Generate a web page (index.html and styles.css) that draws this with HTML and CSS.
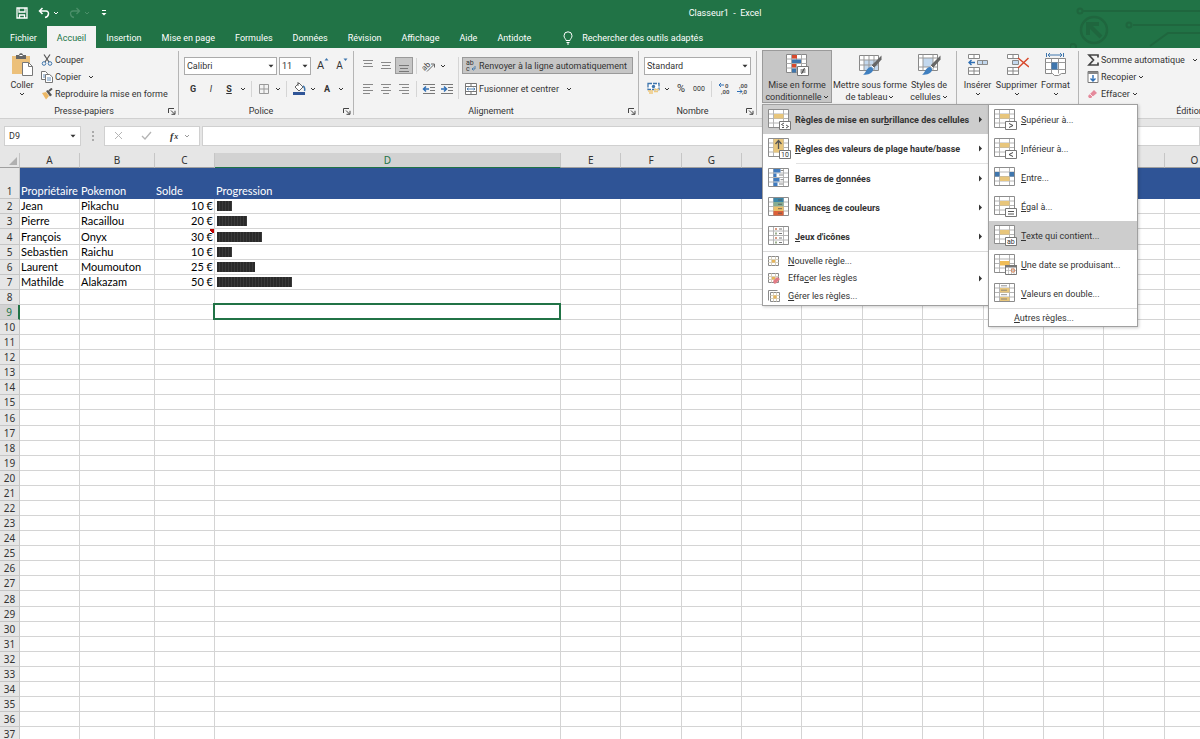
FILE: index.html
```html
<!DOCTYPE html>
<html lang="fr">
<head>
<meta charset="utf-8">
<title>Classeur1 - Excel</title>
<link rel="stylesheet" href="styles.css">
</head>
<body>
<svg class="defs" aria-hidden="true">
  <symbol id="chev" viewBox="0 0 6 6"><path d="M1 2l2 2 2-2" fill="none" stroke="currentColor"/></symbol>
  <symbol id="tri" viewBox="0 0 6 6"><path d="M.5 1.8h5L3 4.6z" fill="currentColor"/></symbol>
  <symbol id="launch" viewBox="0 0 8 8"><path d="M.5 6V1.500H6M3 3.500l3.500 3.500M7 3.800V7.300H3.500" fill="none" stroke="#444"/></symbol>
  <symbol id="grid" viewBox="0 0 24 22"><path d="M.5.5h20v18H.5z" fill="#fff"/><path d="M.5 5h20M.5 9.500h20M.5 14h20M5.500.5v18M15.500.5v18" fill="none" stroke="#b4b4b4"/><path d="M.5.5h20v18H.5z" fill="none" stroke="#8c8c8c"/></symbol>
  <symbol id="tag" viewBox="0 0 24 22"><path d="M11.500 12.500h11v8h-11z" fill="#fff" stroke="#777"/></symbol>
  <symbol id="g-hl" viewBox="0 0 24 22"><use href="#grid" width="24" height="22"/><path d="M6 5h9.500v4.500H6z" fill="#e8c67c"/></symbol>
  <symbol id="i-top" viewBox="0 0 24 22"><use href="#g-hl" width="24" height="22"/><use href="#tag" width="24" height="22"/><path d="M16 14l-2.500 1.500L16 17M14 18.500h2M18 16l2.500 1.500L18 19" fill="none" stroke="#444" stroke-width=".9"/></symbol>
  <symbol id="i-ten" viewBox="0 0 24 22"><use href="#grid" width="24" height="22"/><path d="M5.500 1h10v13.500h-10z" fill="#e8c67c"/><path d="M10.500 11V3M7.500 6l3-3.500 3 3.500" fill="none" stroke="#555" stroke-width="1.300"/><use href="#tag" width="24" height="22"/><text x="13" y="19" class="tagtext">10</text></symbol>
  <symbol id="i-bars" viewBox="0 0 24 22"><use href="#grid" width="24" height="22"/><path d="M5.500 1h7v3.500h-7zM5.500 5.500h3v3.500h-3zM5.500 10h6v3.500h-6zM5.500 14.500h4v3.500h-4z" fill="#3f7bbf"/><path d="M12.500 2.500h3M11 7h4M12.500 11.700h3M11 16h4" stroke="#888"/></symbol>
  <symbol id="i-scale" viewBox="0 0 24 22"><use href="#grid" width="24" height="22"/><path d="M5.500 1h10v4h-10z" fill="#3c87a8"/><path d="M5.500 5h10v4.500h-10z" fill="#86ad92"/><path d="M5.500 9.500h10V14h-10z" fill="#ecc168"/><path d="M5.500 14h10v4.500h-10z" fill="#dc6038"/><path d="M10 3h4M10 7.300h4M10 11.700h4M10 16.200h4" stroke="#555" stroke-width=".8"/></symbol>
  <symbol id="i-set" viewBox="0 0 24 22"><use href="#grid" width="24" height="22"/><path d="M7 2h2v2H7zM7 11h2v2H7z" fill="#d99a83"/><path d="M7 6.500h2v2H7zM7 15.500h2v2H7z" fill="#9ab08c"/><path d="M11 3h3M11 7.500h3M11 12h3M11 16.500h3" stroke="#777"/></symbol>
  <symbol id="i-rule" viewBox="0 0 12 12"><path d="M.5 1.500h10v9H.5z" fill="#fff" stroke="#8a8a8a"/><path d="M3.500 1.500v9M7.500 1.500v9M.5 4.500h10M.5 7.500h10" stroke="#d8d0bc"/><path d="M4 5h3v2.500H4z" fill="#e8b558"/></symbol>
  <symbol id="i-ruledel" viewBox="0 0 12 12"><use href="#i-rule" width="12" height="12"/><path d="M5 9l4-4 3 2-4 4.500-2 .3z" fill="#e27c86"/></symbol>
  <symbol id="i-rulemng" viewBox="0 0 12 12"><path d="M.5 10.500V.5h9" fill="none" stroke="#8a8a8a"/><path d="M2.500 2.500h9v9h-9z" fill="#fff" stroke="#8a8a8a"/><path d="M5.500 2.500v9M8.500 2.500v9M2.500 5.500h9M2.500 8.500h9" stroke="#d8d0bc"/><path d="M5.500 5.500h3v3h-3z" fill="#e8b558"/></symbol>
  <symbol id="i-gt" viewBox="0 0 24 22"><use href="#g-hl" width="24" height="22"/><use href="#tag" width="24" height="22"/><path d="M15 14.500l4 2-4 2" fill="none" stroke="#444"/></symbol>
  <symbol id="i-lt" viewBox="0 0 24 22"><use href="#g-hl" width="24" height="22"/><use href="#tag" width="24" height="22"/><path d="M19 14.500l-4 2 4 2" fill="none" stroke="#444"/></symbol>
  <symbol id="i-between" viewBox="0 0 24 22"><use href="#grid" width="24" height="22"/><path d="M1 5h4.500v4.500H1zM15.500 5H20v4.500h-4.500z" fill="#3f76ad"/><path d="M6 9.500h9.500V14H6z" fill="#e8c67c"/></symbol>
  <symbol id="i-eq" viewBox="0 0 24 22"><use href="#g-hl" width="24" height="22"/><use href="#tag" width="24" height="22"/><path d="M14 15.500h6M14 18h6" stroke="#555"/></symbol>
  <symbol id="i-txt" viewBox="0 0 24 22"><use href="#g-hl" width="24" height="22"/><use href="#tag" width="24" height="22"/><text x="13" y="19" class="tagtext">ab</text></symbol>
  <symbol id="i-date" viewBox="0 0 24 22"><use href="#grid" width="24" height="22"/><path d="M6 7h9.500v4.500H6z" fill="#f0bd58"/><path d="M11.500 11.500h11v9h-11z" fill="#fff" stroke="#777"/><path d="M11 11h12v2.500H11z" fill="#777"/><path d="M14.500 13v7M17.500 13v7M20 13v7M12 16.500h10" stroke="#bbb" stroke-width=".8"/><circle cx="19" cy="16.500" r="1.700" fill="none" stroke="#d97b4a"/></symbol>
  <symbol id="i-dup" viewBox="0 0 24 22"><use href="#grid" width="24" height="22"/><path d="M6 5h9.500v4.500H6zM6 14h9.500v4H6z" fill="#e8c67c"/><path d="M7 2.800h6M7 7.200h6M7 11.700h6M7 16h6" stroke="#777" stroke-width=".8"/></symbol>
  <symbol id="brush" viewBox="0 0 24 24"><path d="M23.500 2.500v4L16 15l-2.500-2.500z" fill="#666"/><path d="M13.500 12.500l2.500 2.500" stroke="#fff"/><path d="M12.500 14c3 .5 3.500 3.500 1 5.500-2.500 2-5.500 2.500-8.500 2 3-1 3-6.500 7.500-7.500z" fill="#3f7fbf"/></symbol>
</svg>

<header class="top">
  <svg class="circuit" viewBox="0 0 130 48" aria-hidden="true"><g fill="none" stroke="#1f663e" stroke-width="2"><circle cx="10" cy="11" r="2.500"/><path d="M13 11h117M63 25h67M80 46l18-13h32"/><circle cx="59" cy="25" r="2.500"/><circle cx="24" cy="30" r="13" stroke-width="2.500"/><path d="M31 37L19 25M18 35V24h11" stroke-width="4"/><circle cx="3" cy="47" r="3"/></g></svg>
  <div class="titlebar">
    <div class="quick">
      <button aria-label="Enregistrer"><svg width="12" height="12" viewBox="0 0 12 12"><path d="M1 1h10v10H1zM3 1v4h6V1M3.500 11V8h5v3" fill="none" stroke="#fff" stroke-width="1.300"/></svg></button>
      <button class="undo" aria-label="Annuler"><svg width="12" height="12" viewBox="0 0 12 12"><path d="M4.500 1L1.500 4l3 3M1.500 4H8c3.500 0 3.500 5.500-1 6.500" fill="none" stroke="#fff" stroke-width="1.500"/></svg><svg class="c"><use href="#chev"/></svg></button>
      <button class="redo" aria-label="Rétablir" disabled><svg width="12" height="12" viewBox="0 0 12 12"><path d="M7.500 1l3 3-3 3M10.500 4H4c-3.500 0-3.500 5.500 1 6.500" fill="none" stroke="currentColor" stroke-width="1.300"/></svg><svg class="c"><use href="#chev"/></svg></button>
      <button aria-label="Personnaliser"><svg width="8" height="8" viewBox="0 0 8 8"><path d="M2 1.500h4" stroke="#fff"/><path d="M1.500 4h5L4 6.500z" fill="#fff"/></svg></button>
    </div>
    <h1>Classeur1&nbsp; -&nbsp; Excel</h1>
  </div>
  <nav class="tabs">
    <button>Fichier</button><button class="active">Accueil</button><button>Insertion</button><button>Mise en page</button><button>Formules</button><button>Données</button><button>Révision</button><button>Affichage</button><button>Aide</button><button>Antidote</button>
    <button class="tell"><svg width="10" height="14" viewBox="0 0 10 14"><path d="M3 9.500C3 8 1 7 1 4.800a4 4 0 018 0C9 7 7 8 7 9.500zM3.500 11.500h3M4 13h2" fill="none" stroke="#fff"/></svg>Rechercher des outils adaptés</button>
  </nav>
</header>

<main>
<section class="ribbon">
  <div class="group g-clip">
    <div class="body">
      <button class="big paste"><svg width="24" height="24" viewBox="0 0 24 24"><path d="M2 3h18v18H2z" fill="#ecc07a"/><path d="M6 2h3c0-2.500 4-2.500 4 0h3v4H6z" fill="#666"/><path d="M9.500 2.500h3" stroke="#fff"/><path d="M12.500 9.500h6l4 4v9h-10z" fill="#fff" stroke="#777"/><path d="M18.500 9.500v4h4" fill="none" stroke="#777"/></svg><span>Coller</span><svg class="c"><use href="#chev"/></svg></button>
      <div class="list">
        <button><svg width="12" height="12" viewBox="0 0 12 12"><path d="M3 .5l5 7.500M9 .5L4 8" stroke="#555" stroke-width="1.200"/><circle cx="3" cy="9.500" r="1.800" fill="none" stroke="#3f76ad"/><circle cx="9" cy="9.500" r="1.800" fill="none" stroke="#3f76ad"/></svg>Couper</button>
        <button><svg width="12" height="12" viewBox="0 0 12 12"><path d="M.5.5h4l2 2v6h-6z" fill="#fff" stroke="#777"/><path d="M4.500 3.500h4l3 2.500v5.500h-7z" fill="#fff" stroke="#777"/><path d="M6 7h4M6 9h4M2 4h2M2 6h2" stroke="#3f76ad" stroke-width=".8"/></svg>Copier <svg class="c far"><use href="#chev"/></svg></button>
        <button><svg width="12" height="12" viewBox="0 0 12 12"><path d="M1 5l4-1 3 4-3 3.500z" fill="#ecb866"/><path d="M5 3l2-1 4 5-2 1.500z" fill="#555"/><path d="M8 3l3-2.500" stroke="#555" stroke-width="2"/></svg>Reproduire la mise en forme</button>
      </div>
    </div>
    <div class="name"><span>Presse-papiers</span><button aria-label="Options du presse-papiers"><svg width="8" height="8"><use href="#launch"/></svg></button></div>
  </div>

  <div class="group g-font">
    <div class="body rows">
      <div class="row">
        <label class="combo w-font"><select aria-label="Police"><option>Calibri</option></select><svg class="c"><use href="#tri"/></svg></label>
        <label class="combo w-size"><select aria-label="Taille"><option>11</option></select><svg class="c"><use href="#tri"/></svg></label>
        <button class="ib a-up" aria-label="Agrandir">A<svg class="sup" viewBox="0 0 5 5"><path d="M.5 3.500L2.500 1l2 2.500z" fill="#3f76ad"/></svg></button>
        <button class="ib a-down" aria-label="Réduire">A<svg class="sup" viewBox="0 0 5 5"><path d="M.5 1.500h4L2.500 4z" fill="#3f76ad"/></svg></button>
      </div>
      <div class="row">
        <button class="ib"><b>G</b></button><button class="ib"><i>I</i></button><button class="ib"><b><u>S</u></b></button><button class="cb" aria-label="Soulignement"><svg class="c"><use href="#chev"/></svg></button>
        <i class="sep"></i>
        <button class="ib" aria-label="Bordures"><svg width="10" height="10" viewBox="0 0 10 10"><path d="M.5.5h9v9h-9zM5 .5v9M.5 5h9" fill="none" stroke="#999"/></svg></button><button class="cb" aria-label="Autres bordures"><svg class="c"><use href="#chev"/></svg></button>
        <i class="sep"></i>
        <button class="ib" aria-label="Remplissage"><svg width="14" height="13" viewBox="0 0 14 13"><path d="M3 5l4-4 4 4-4 4z" fill="#fff" stroke="#666"/><path d="M6 4V0" stroke="#666"/><path d="M11 4c2 1 2 3 1.500 5" fill="none" stroke="#3f76ad" stroke-width="1.500"/><path d="M1 10h12v3H1z" fill="#2f5597"/></svg></button><button class="cb" aria-label="Couleurs"><svg class="c"><use href="#chev"/></svg></button>
        <button class="ib a-col"><b>A</b></button><button class="cb" aria-label="Couleur de police"><svg class="c"><use href="#chev"/></svg></button>
      </div>
    </div>
    <div class="name"><span>Police</span><button aria-label="Options de police"><svg width="8" height="8"><use href="#launch"/></svg></button></div>
  </div>

  <div class="group g-align">
    <div class="body">
      <div class="rows">
        <div class="row">
          <button class="ib" aria-label="Aligner en haut"><svg width="12" height="12"><path d="M1 .5h10M2 3.500h8M1 6.500h10" stroke="#888"/></svg></button><button class="ib" aria-label="Aligner au centre"><svg width="12" height="12"><path d="M1 2.500h10M2 5.500h8M1 8.500h10" stroke="#888"/></svg></button><button class="ib on" aria-label="Aligner en bas"><svg width="12" height="12"><path d="M1 5.500h10M2 8.500h8M1 11.500h10" stroke="#777"/></svg></button>
          <i class="sep"></i>
          <button class="ib" aria-label="Orientation"><svg width="14" height="12" viewBox="0 0 14 12"><text x="0" y="9" class="ori" transform="rotate(-45 4 7)">ab</text><path d="M5 11.500l7-7M12.500 7.500v-3.500h-3.500" fill="none" stroke="#666"/></svg></button><button class="cb" aria-label="Orientations"><svg class="c"><use href="#chev"/></svg></button>
        </div>
        <div class="row">
          <button class="ib" aria-label="Gauche"><svg width="12" height="12"><path d="M1 1.500h10M1 4.500h7M1 7.500h10M1 10.500h7" stroke="#888"/></svg></button><button class="ib" aria-label="Centre"><svg width="12" height="12"><path d="M1 1.500h10M3 4.500h6M1 7.500h10M3 10.500h6" stroke="#888"/></svg></button><button class="ib" aria-label="Droite"><svg width="12" height="12"><path d="M1 1.500h10M4 4.500h7M1 7.500h10M4 10.500h7" stroke="#888"/></svg></button>
          <i class="sep"></i>
          <button class="ib" aria-label="Diminuer le retrait"><svg width="14" height="12"><path d="M1 1.500h12M8 4.500h5M8 7.500h5M1 10.500h12" stroke="#777"/><path d="M7 6H2M4 3.500L1.500 6 4 8.500" fill="none" stroke="#2f6fb5" stroke-width="1.500"/></svg></button><button class="ib" aria-label="Augmenter le retrait"><svg width="14" height="12"><path d="M1 1.500h12M8 4.500h5M8 7.500h5M1 10.500h12" stroke="#777"/><path d="M1 6h5M4 3.500L6.500 6 4 8.500" fill="none" stroke="#2f6fb5" stroke-width="1.500"/></svg></button>
        </div>
      </div>
      <i class="sep tall"></i>
      <div class="rows wide">
        <div class="row"><button class="wide-b on"><svg width="12" height="13" viewBox="0 0 12 13"><text x="1" y="6" class="abc">ab</text><text x="1" y="12" class="abc">c</text><path d="M10 7v3H7M8.500 8.500L7 10l1.500 1.500" fill="none" stroke="#3f76ad" stroke-width=".9"/></svg>Renvoyer à la ligne automatiquement</button></div>
        <div class="row"><button class="wide-b"><svg width="12" height="12" viewBox="0 0 12 12"><path d="M.5.5h11v11H.5zM.5 3.500h11M.5 8.500h11M6 .5v3M6 8.500v3" fill="#fff" stroke="#777"/><path d="M2 6h8M3.500 4.800L2 6l1.500 1.200M8.500 4.800L10 6 8.500 7.200" fill="none" stroke="#3f76ad" stroke-width=".9"/></svg>Fusionner et centrer<svg class="c far"><use href="#chev"/></svg></button></div>
      </div>
    </div>
    <div class="name"><span>Alignement</span><button aria-label="Options d'alignement"><svg width="8" height="8"><use href="#launch"/></svg></button></div>
  </div>

  <div class="group g-num">
    <div class="body rows">
      <div class="row"><label class="combo w-num"><select aria-label="Format de nombre"><option>Standard</option></select><svg class="c"><use href="#tri"/></svg></label></div>
      <div class="row">
        <button class="ib" aria-label="Format monétaire"><svg width="13" height="13" viewBox="0 0 13 13"><path d="M1 1.500h11v6H1z" fill="#fff" stroke="#3f76ad" stroke-width="1.300" stroke-dasharray="4 1"/><circle cx="6.500" cy="4.500" r="1.700" fill="#3f76ad"/><path d="M1 9h5M2 11h4M7 7.500h5M7 9.500h4" stroke="#efc97e" stroke-width="1.600"/></svg></button><button class="cb" aria-label="Monnaies"><svg class="c"><use href="#chev"/></svg></button>
        <button class="ib pct">%</button><button class="ib tho">000</button>
        <i class="sep"></i>
        <button class="ib" aria-label="Ajouter une décimale"><svg width="13" height="13" viewBox="0 0 13 13"><text x="7" y="6" class="dec">0</text><text x="3" y="12" class="dec">,00</text><path d="M6 3H1M3 1L1 3l2 2" fill="none" stroke="#2f6fb5"/></svg></button><button class="ib" aria-label="Réduire les décimales"><svg width="13" height="13" viewBox="0 0 13 13"><text x="3" y="6" class="dec">,00</text><text x="6" y="12" class="dec">,0</text><path d="M1 9.500h5M4 7.500l2 2-2 2" fill="none" stroke="#2f6fb5"/></svg></button>
      </div>
    </div>
    <div class="name"><span>Nombre</span><button aria-label="Options de nombre"><svg width="8" height="8"><use href="#launch"/></svg></button></div>
  </div>

  <div class="group g-style">
    <div class="body">
      <div class="drop">
        <button class="big cond on"><svg width="24" height="24" viewBox="0 0 24 24"><path d="M1.500 1.500h20v18h-20z" fill="#fff" stroke="#888"/><path d="M1.500 6h20M1.500 10.500h20M1.500 15h20M6.500 1.500v18M16.500 1.500v18M11.500 1.500v18" stroke="#aaa"/><path d="M7 2h5v3.500H7zM7 11h4v3.500H7z" fill="#d8492c"/><path d="M7 6.500h9v3.500H7zM7 15.500h4v4H7z" fill="#3f76ad"/><path d="M12.500 13.500h11v9h-11z" fill="#fff" stroke="#777"/><path d="M15.500 17h5M15.500 19h5M19.500 15l-3 6" stroke="#333" stroke-width=".9"/></svg><span>Mise en forme</span><span>conditionnelle<svg class="c"><use href="#chev"/></svg></span></button>
        <ul class="menu main-menu" role="menu">
          <li class="big-i hot"><button><svg class="ic"><use href="#i-top"/></svg><span>Règles de mise en sur<u>b</u>rillance des cellules</span><svg class="arr" viewBox="0 0 4 8"><path d="M0 0l4 4-4 4z"/></svg></button>
            <ul class="menu sub-menu" role="menu">
              <li class="big-i"><button><svg class="ic"><use href="#i-gt"/></svg><span><u>S</u>upérieur à...</span></button></li>
              <li class="big-i"><button><svg class="ic"><use href="#i-lt"/></svg><span><u>I</u>nférieur à...</span></button></li>
              <li class="big-i"><button><svg class="ic"><use href="#i-between"/></svg><span><u>E</u>ntre...</span></button></li>
              <li class="big-i"><button><svg class="ic"><use href="#i-eq"/></svg><span><u>É</u>gal à...</span></button></li>
              <li class="big-i hot"><button><svg class="ic"><use href="#i-txt"/></svg><span><u>T</u>exte qui contient...</span></button></li>
              <li class="big-i"><button><svg class="ic"><use href="#i-date"/></svg><span><u>U</u>ne date se produisant...</span></button></li>
              <li class="big-i"><button><svg class="ic"><use href="#i-dup"/></svg><span><u>V</u>aleurs en double...</span></button></li>
              <li class="small-i line other"><button><span><u>A</u>utres règles...</span></button></li>
            </ul>
          </li>
          <li class="big-i"><button><svg class="ic"><use href="#i-ten"/></svg><span><u>R</u>ègles des valeurs de plage haute/basse</span><svg class="arr" viewBox="0 0 4 8"><path d="M0 0l4 4-4 4z"/></svg></button></li>
          <li class="big-i inset"><button><svg class="ic"><use href="#i-bars"/></svg><span>Barres de <u>d</u>onnées</span><svg class="arr" viewBox="0 0 4 8"><path d="M0 0l4 4-4 4z"/></svg></button></li>
          <li class="big-i"><button><svg class="ic"><use href="#i-scale"/></svg><span>Nuance<u>s</u> de couleurs</span><svg class="arr" viewBox="0 0 4 8"><path d="M0 0l4 4-4 4z"/></svg></button></li>
          <li class="big-i"><button><svg class="ic"><use href="#i-set"/></svg><span><u>J</u>eux d'icônes</span><svg class="arr" viewBox="0 0 4 8"><path d="M0 0l4 4-4 4z"/></svg></button></li>
          <li class="small-i line"><button><svg class="ics"><use href="#i-rule"/></svg><span><u>N</u>ouvelle règle...</span></button></li>
          <li class="small-i"><button><svg class="ics"><use href="#i-ruledel"/></svg><span>Effa<u>c</u>er les règles</span><svg class="arr" viewBox="0 0 4 8"><path d="M0 0l4 4-4 4z"/></svg></button></li>
          <li class="small-i"><button><svg class="ics"><use href="#i-rulemng"/></svg><span><u>G</u>érer les règles...</span></button></li>
        </ul>
      </div>
      <button class="big w-tab"><svg width="24" height="24" viewBox="0 0 24 24"><path d="M1.500 2.500h19v15h-19z" fill="#fff" stroke="#888"/><path d="M6 7h14v10H6z" fill="#c3d8ee"/><path d="M1.500 7h19M1.500 12h19M6 2.500v15M11 2.500v15M16 2.500v15" stroke="#999"/><use href="#brush" width="24" height="24"/></svg><span>Mettre sous forme</span><span>de tableau<svg class="c"><use href="#chev"/></svg></span></button>
      <button class="big w-sty"><svg width="24" height="24" viewBox="0 0 24 24"><path d="M1.500 1.500h19v16h-19z" fill="#fff" stroke="#888"/><path d="M6 5h10v9H6z" fill="#c3d8ee"/><path d="M1.500 5h19M1.500 14h19M6 1.500v16M16 1.500v16" stroke="#999"/><use href="#brush" width="24" height="24"/></svg><span>Styles de</span><span>cellules<svg class="c"><use href="#chev"/></svg></span></button>
    </div>
  </div>

  <div class="group g-cells">
    <div class="body">
      <button class="big"><svg width="24" height="24" viewBox="0 0 24 24"><path d="M2.500 1.500h11v4h-11zM8 1.500v4M2.500 14.500h11v7h-11zM8 14.500v7M2.500 18h11" fill="#fff" stroke="#888"/><path d="M11.500 7.500h10v4h-10zM16.500 7.500v4" fill="#c3d8ee" stroke="#888"/><path d="M9 9.500H3M5.500 7L3 9.500 5.500 12" fill="none" stroke="#2f6fb5" stroke-width="1.400"/></svg><span>Insérer</span><svg class="c"><use href="#chev"/></svg></button>
      <button class="big"><svg width="24" height="24" viewBox="0 0 24 24"><path d="M2.500 1.500h11v4h-11zM8 1.500v4M2.500 14.500h11v7h-11zM8 14.500v7M2.500 18h11" fill="#fff" stroke="#888"/><path d="M7.500 7.500h6v4h-6z" fill="#c3d8ee" stroke="#888"/><path d="M13 5l11 9M23.500 5L13 15" stroke="#d8492c" stroke-width="1.500"/></svg><span>Supprimer</span><svg class="c"><use href="#chev"/></svg></button>
      <button class="big"><svg width="24" height="24" viewBox="0 0 24 24"><path d="M2.500 0v4M19.500 0v4M4 2h14M6 0L4 2l2 2M16 0l2 2-2 2" fill="none" stroke="#3f76ad"/><path d="M1.500 5.500h20v15h-4l-3 2h-4l-2-2h-7z" fill="#fff" stroke="#888"/><path d="M1.500 9.500h20M1.500 16.500h20M7.500 5.500v15M14.500 5.500v15" stroke="#999"/><path d="M7.500 9.500h6v7h-6z" fill="#3f76ad"/></svg><span>Format</span><svg class="c"><use href="#chev"/></svg></button>
    </div>
  </div>

  <div class="group g-edit">
    <div class="body">
      <div class="list">
        <button><svg width="12" height="12" viewBox="0 0 12 12"><path d="M11 3.500V1H2l4.500 5L2 11h9V8.500" fill="none" stroke="#444" stroke-width="1.700"/></svg>Somme automatique<svg class="c far"><use href="#chev"/></svg></button>
        <button><svg width="12" height="12" viewBox="0 0 12 12"><path d="M1 .5h10v11H1z" fill="#fff" stroke="#777"/><path d="M1 1h10v2H1z" fill="#888"/><path d="M6 4v6M3.500 7.500L6 10l2.500-2.500" fill="none" stroke="#2f6fb5" stroke-width="1.400"/></svg>Recopier<svg class="c"><use href="#chev"/></svg></button>
        <button><svg width="12" height="12" viewBox="0 0 12 12"><path d="M1 8l6-6 3 3-6 5H2z" fill="#e58a9c"/><path d="M3 6l3 3" stroke="#fff" stroke-width=".8"/></svg>Effacer<svg class="c"><use href="#chev"/></svg></button>
      </div>
    </div>
    <div class="name"><span>Édition</span></div>
  </div>
</section>

<section class="fbar">
  <label class="namebox"><input aria-label="Zone Nom" value="D9"><svg class="c"><use href="#tri"/></svg></label>
  <svg class="dots" width="4" height="12"><path d="M1 1h2v2H1zM1 5h2v2H1zM1 9h2v2H1z" fill="#aaa"/></svg>
  <div class="fx">
    <button aria-label="Annuler la saisie"><svg width="10" height="10"><path d="M1 1l7 7M8 1L1 8" stroke="#b4b4b4"/></svg></button>
    <button aria-label="Valider"><svg width="12" height="10"><path d="M1 5l3 3 6-7" fill="none" stroke="#b4b4b4" stroke-width="1.300"/></svg></button>
    <button class="fn">f<small>x</small><svg class="c"><use href="#chev"/></svg></button>
  </div>
  <input class="formula" aria-label="Barre de formule">
</section>

<section class="sheet">
  <table>
    <colgroup><col class="k-h"><col class="k-a"><col class="k-b"><col class="k-a"><col class="k-d"><col span="11"></colgroup>
    <thead><tr><th><svg width="10" height="9"><path d="M9 0v8H1z" fill="#b0b0b0"/></svg></th><th>A</th><th>B</th><th>C</th><th class="cur">D</th><th>E</th><th>F</th><th>G</th><th>H</th><th>I</th><th>J</th><th>K</th><th>L</th><th>M</th><th>N</th><th>O</th></tr></thead>
    <tbody id="rows"></tbody>
  </table>
</section>
</main>
<script src="sheet.js"></script>
</body>
</html>
```
FILE: sheet.js
```js
const headings = ["Propriétaire", "Pokemon", "Solde", "Progression"];
const data = [
  ["Jean", "Pikachu", 10],
  ["Pierre", "Racaillou", 20],
  ["François", "Onyx", 30, true],
  ["Sebastien", "Raichu", 10],
  ["Laurent", "Moumouton", 25],
  ["Mathilde", "Alakazam", 50]
];
const body = document.getElementById("rows");
const blanks = n => "<td></td>".repeat(n);

for (let r = 1; r <= 37; r++) {
  const tr = document.createElement("tr");
  let cells;
  if (r === 1) {
    tr.className = "head";
    cells = headings.map(h => `<td>${h}</td>`).join("");
  } else if (data[r - 2]) {
    const [owner, name, sum, note] = data[r - 2];
    cells = `<td>${owner}</td><td>${name}</td><td class="num${note ? " note" : ""}">${sum} €</td>` +
      `<td><div class="bar" style="width:${Math.round(sum * 1.5)}px"></div></td>`;
  } else {
    cells = blanks(3) + (r === 9 ? '<td class="sel"></td>' : blanks(1));
  }
  tr.innerHTML = `<th${r === 9 ? ' class="cur"' : ""}>${r}</th>` + cells + blanks(11);
  body.append(tr);
}
```
FILE: styles.css
```css
* { box-sizing: border-box; }
body { margin: 0; height: 100vh; overflow: hidden; display: flex; flex-direction: column; background: #fff; color: #333; font: 9px/12px Roboto, "Open Sans", sans-serif; }
button, input, select { font: inherit; color: inherit; background: none; border: 0; padding: 0; margin: 0; }
button { display: flex; align-items: center; white-space: nowrap; }
svg { flex: none; display: block; }
.defs { position: absolute; width: 0; height: 0; }
.c { width: 6px; height: 6px; }
.tagtext { font: 7px Roboto, sans-serif; fill: #333; }
.abc { font: 7px Roboto, sans-serif; fill: #333; }
.ori { font: 8px Roboto, sans-serif; fill: #444; }
.dec { font: bold 6px Roboto, sans-serif; fill: #555; }

.top { position: relative; background: #217346; color: #fff; }
.circuit { position: absolute; right: 0; top: 0; width: 130px; height: 48px; }
.titlebar { display: flex; height: 26px; align-items: center; }
.quick { width: 250px; display: flex; align-items: center; gap: 10px; padding-left: 16px; }
.quick button { gap: 3px; }
.quick .redo { color: #4b8f69; }
h1 { flex: 1; margin: 0; font: inherit; text-align: center; }
.tabs { position: relative; display: flex; height: 22px; }
.tabs button { padding: 1px 10px 0; }
.tabs .active { background: #f3f3f3; color: #217346; }
.tabs .tell { gap: 9px; margin-left: 12px; }

main { flex: 1; min-height: 0; display: flex; flex-direction: column; }
.ribbon { display: flex; flex: none; height: 71px; background: #f3f3f3; border-bottom: 1px solid #d0d0d0; }
.group { flex: none; position: relative; display: flex; flex-direction: column; justify-content: space-between; padding-top: 2px; }
.group::after { content: ""; position: absolute; right: 0; top: 3px; bottom: 3px; border-right: 1px solid #b5b5b5; }
.g-clip { width: 179px; }
.g-font { width: 175px; }
.g-align { width: 285px; }
.g-num { width: 118px; }
.g-style { width: 200px; }
.g-cells { width: 122px; }
.g-edit { width: 224px; }
.body { display: flex; }
.name { display: flex; align-items: center; height: 14px; padding-right: 2px; }
.name span { flex: 1; text-align: center; }
.name button { width: 9px; }
.rows { display: flex; flex-direction: column; gap: 6px; padding: 7px 0 0 5px; }
.row { display: flex; align-items: center; height: 17px; }
.big { flex-direction: column; height: 53px; padding-top: 3px; }
.big > svg:first-child { margin-bottom: 2px; }
.big span { display: flex; align-items: center; gap: 1px; line-height: 12px; }
.on { background: #c6c6c6; outline: 1px solid #9a9a9a; outline-offset: -1px; }
.paste { width: 30px; margin-left: 7px; }
.list { display: flex; flex-direction: column; padding: 1px 0 0 4px; }
.list button { height: 17px; gap: 2px; }
.far { margin-left: 5px; }
.combo, .namebox { display: grid; align-items: center; background: #fff; border: 1px solid #ababab; height: 18px; }
.combo > *, .namebox > * { grid-area: 1 / 1; min-width: 0; }
.combo .c, .namebox .c { justify-self: end; margin-right: 2px; pointer-events: none; }
select { appearance: none; width: 100%; height: 16px; padding-left: 2px; }
.w-font { width: 93px; margin-right: 2px; }
.w-size { width: 32px; margin-right: 2px; }
.w-num { width: 107px; }
.ib { width: 18px; height: 17px; justify-content: center; flex: none; }
.a-up { font-size: 11px; width: 20px; }
.a-down { font-size: 10px; width: 18px; }
.sup { width: 5px; height: 5px; align-self: flex-start; }
.cb { width: 10px; height: 17px; justify-content: center; flex: none; }
.sep { flex: none; width: 1px; height: 16px; margin: 0 3px; background: #d5d5d5; }
.sep.tall { height: 42px; margin: 7px 3px 0 2px; }
.rows.wide { padding-left: 0; }
.wide-b { height: 17px; gap: 2px; padding: 0 3px; }
.wide-b.on { width: 171px; }
.g-num .pct { font-size: 11px; }
.g-num .tho { font-size: 7px; }
.g-style .body { padding-left: 5px; }
.drop { position: relative; }
.cond { width: 70px; }
.w-tab { width: 76px; }
.w-sty { width: 42px; }
.g-cells .body { padding-left: 1px; }
.g-cells .big { width: 39px; }
.g-edit .list { padding-left: 8px; }

.menu { position: absolute; z-index: 5; margin: 0; padding: 0; list-style: none; background: #fff; border: 1px solid #a0a0a0; box-shadow: 1px 1px 3px rgb(0 0 0 / 20%); }
.main-menu { left: 0; top: 54px; width: 227px; }
.sub-menu { left: 225px; top: -1px; width: 150px; }
.menu li { position: relative; }
.menu button { width: 100%; height: 100%; padding-left: 5px; }
.big-i { height: 29px; }
.small-i { height: 18px; }
.main-menu > .big-i > button { font-weight: bold; }
.hot > button { background: #cdcdcd; }
.ic { width: 24px; height: 22px; margin-right: 3px; }
.ics { width: 12px; height: 12px; margin-right: 8px; }
.arr { width: 3px; height: 7px; margin: 0 6px 0 auto; fill: #333; }
.line { border-top: 1px solid #dadada; }
.inset { height: 30px; padding-top: 1px; background: linear-gradient(#e2e2e2, #e2e2e2) 33px 0 / 100% 1px no-repeat; }
.main-menu .other button { padding-left: 25px; }

.fbar { flex: none; display: flex; align-items: center; height: 34px; background: #e6e6e6; padding-left: 4px; }
.namebox { width: 77px; height: 20px; border-color: #d0d0d0; }
.namebox input { width: 100%; padding-left: 4px; }
.namebox .c { margin-right: 4px; }
.dots { margin: 0 9px 0 10px; }
.fx { display: flex; width: 96px; height: 20px; background: #fff; border: 1px solid #d0d0d0; padding-left: 9px; gap: 17px; margin-right: 2px; }
.fn { font: italic bold 10px "Liberation Serif", serif; gap: 1px; }
.fn small { font-size: 8px; }
.fn .c { margin-left: 5px; color: #999; }
.formula { flex: 1; height: 20px; background: #fff; border: 1px solid #d0d0d0; }

.sheet { flex: 1; min-height: 0; overflow: hidden; }
table { table-layout: fixed; width: 1225px; border-collapse: separate; border-spacing: 0; }
.k-h { width: 20px; }
.k-a { width: 60px; }
.k-b { width: 75px; }
.k-d { width: 346px; }
th, td { height: 15px; padding: 0; border-right: 1px solid #d4d4d4; border-bottom: 1px solid #d4d4d4; white-space: nowrap; }
th { background: #e6e6e6; font: 10px/14px "Noto Sans", sans-serif; border-color: #c6c6c6; }
thead th { border-bottom-color: #a0a0a0; }
thead svg { margin: 3px 0 0 8px; }
td { font: 11px/14px Lato, sans-serif; color: #000; padding: 0 1px; }
tr:nth-child(12n + 4) > * { height: 16px; }
.cur { background: #d2d2d2; color: #217346; }
thead .cur { border-bottom-color: #217346; }
tbody .cur { border-right: 2px solid #217346; }
.head > * { height: 31px; vertical-align: bottom; }
.head td { background: #2f5496; color: #fff; border-color: #2f5496; }
.num { text-align: right; }
.note, .sel { position: relative; }
.note::after { content: ""; position: absolute; right: 0; top: 0; border-top: 0; border-left: 5px solid transparent; border-bottom: 0; width: 5px; height: 5px; background: linear-gradient(45deg, transparent 50%, #c00000 50%); border: 0; }
.bar { height: 10px; margin-left: 1px; background: repeating-linear-gradient(90deg, #2a2a2a 0 2px, #3a3a3a 2px 3px); }
.sel::after { content: ""; position: absolute; inset: -2px -1px -1px -2px; border: 2px solid #217346; }
```
